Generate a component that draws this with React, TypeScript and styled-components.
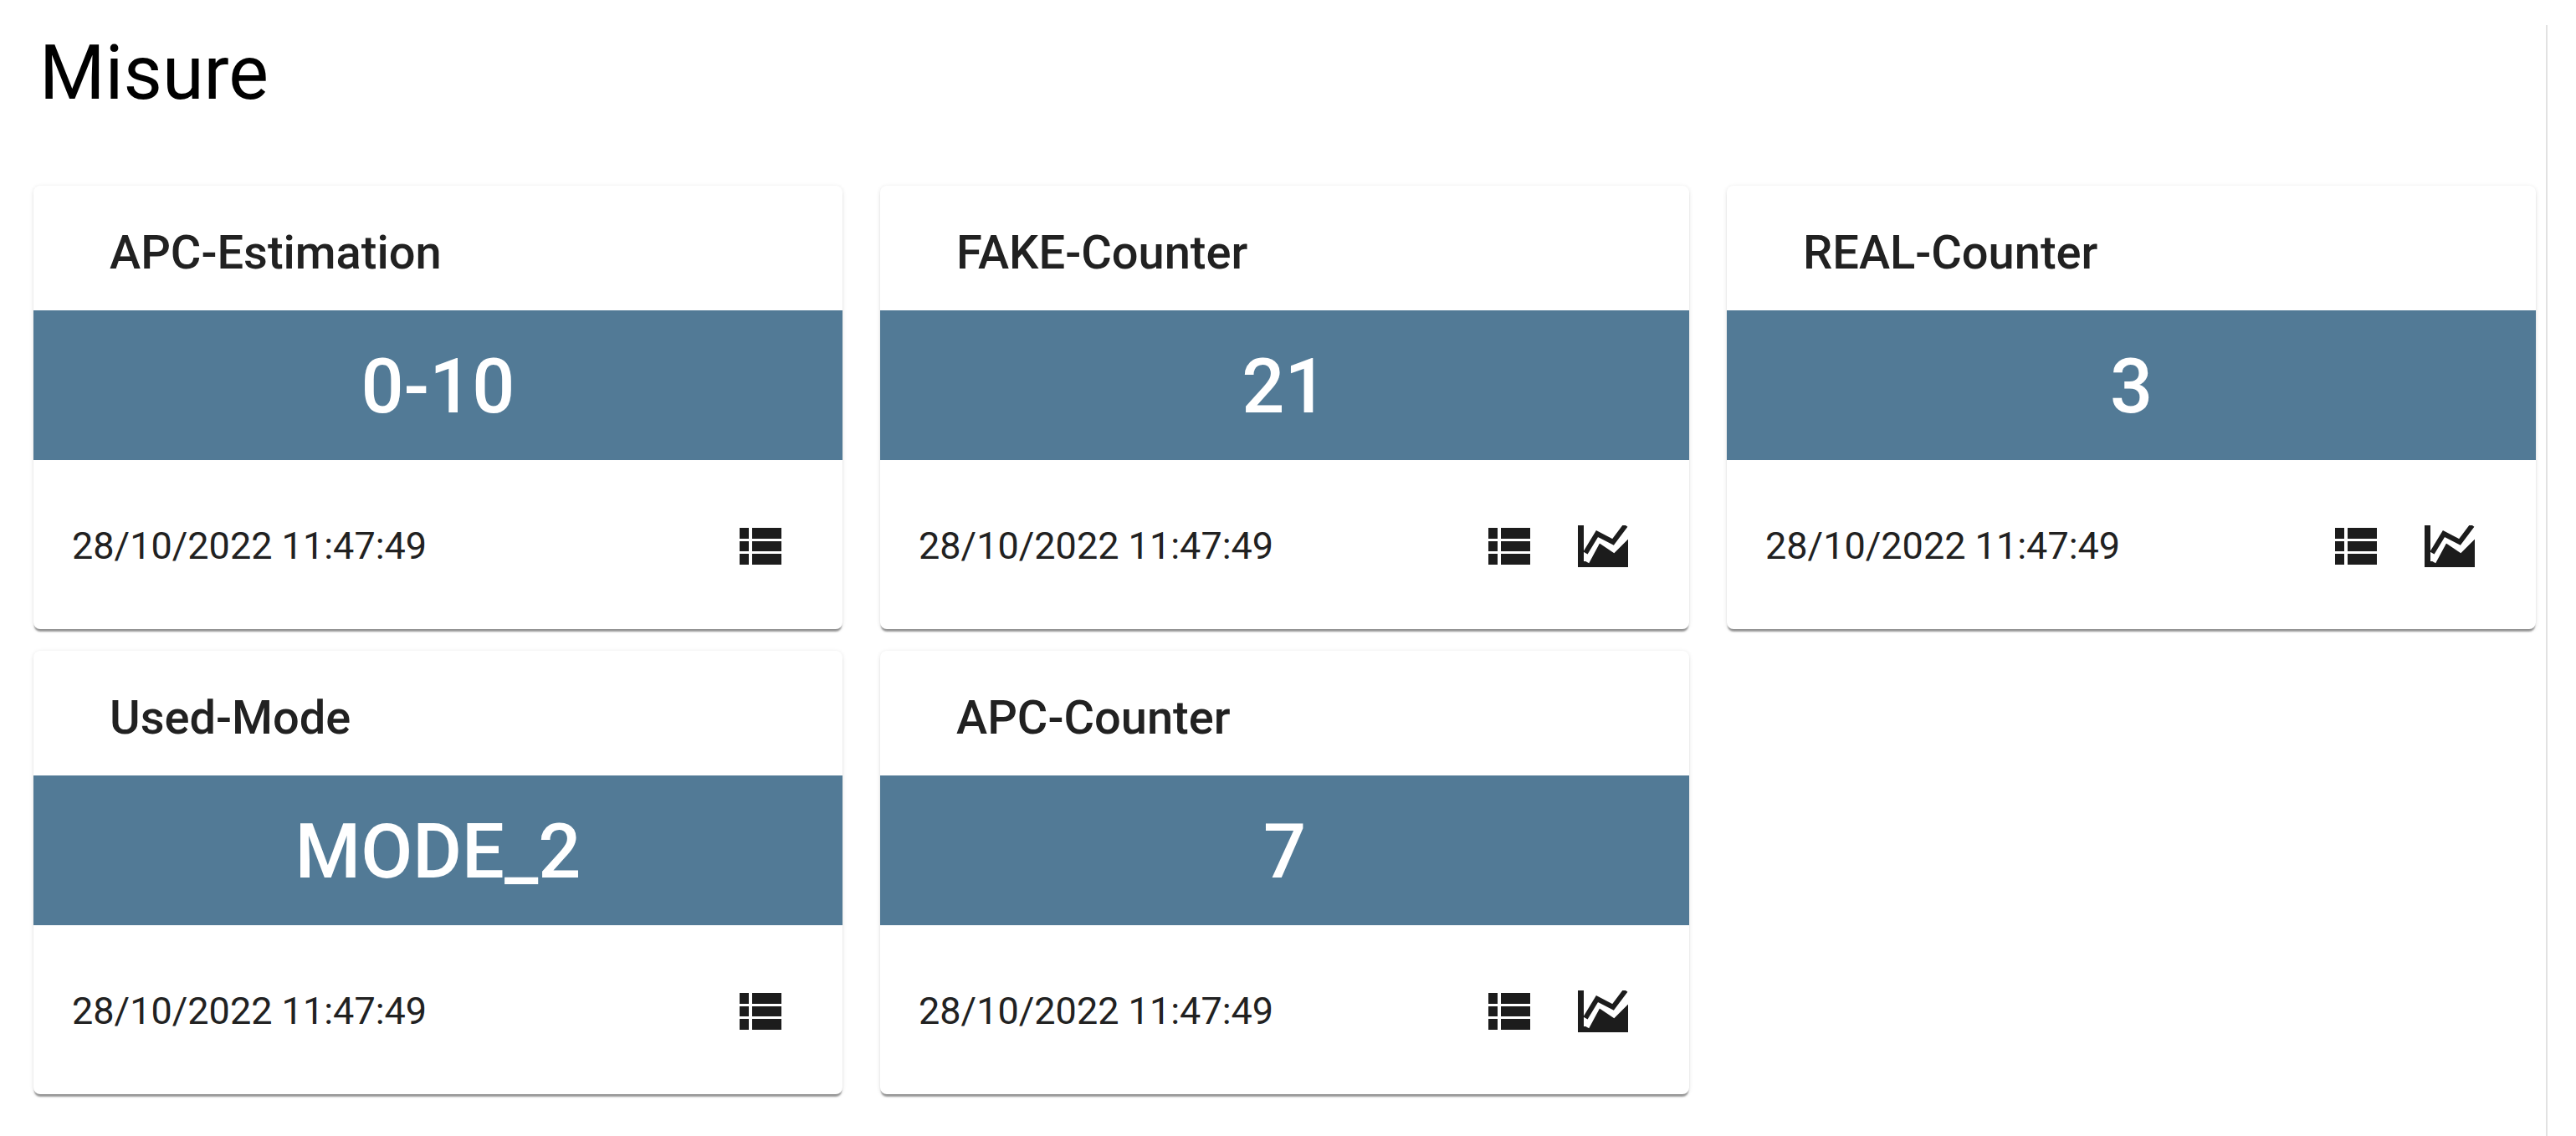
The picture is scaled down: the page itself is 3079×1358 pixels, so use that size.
import styled, { createGlobalStyle } from 'styled-components'

interface Measure {
  name: string
  value: string
  hasChart: boolean
}

const measures: Measure[] = [
  { name: 'APC-Estimation', value: '0-10', hasChart: false },
  { name: 'FAKE-Counter', value: '21', hasChart: true },
  { name: 'REAL-Counter', value: '3', hasChart: true },
  { name: 'Used-Mode', value: 'MODE_2', hasChart: false },
  { name: 'APC-Counter', value: '7', hasChart: true },
]

const GlobalStyle = createGlobalStyle`
  html, body {
    margin: 0;
    padding: 0;
    background: #fff;
    font-family: Roboto, "Liberation Sans", sans-serif;
    overflow: hidden;
  }
`

const Page = styled.div`
  height: 1358px;
  padding-top: 30px;
  box-sizing: border-box;
`

const Panel = styled.main`
  width: 3045px;
  height: 1328px;
  box-sizing: border-box;
  padding: 0 11px 0 40px;
  border-right: 2px solid #e2e2e2;
`

const Title = styled.h1`
  margin: 0 0 79px 7px;
  height: 113px;
  font-size: 90px;
  line-height: 116px;
  font-weight: 400;
  color: #000;
`

const Grid = styled.div`
  display: grid;
  grid-template-columns: repeat(3, 967px);
  grid-template-rows: 530px 530px;
  column-gap: 45px;
  row-gap: 26px;
`

const Card = styled.section`
  border-radius: 8px;
  background: #fff;
  overflow: hidden;
  display: flex;
  flex-direction: column;
  box-shadow: 0 4px 2px -1px rgba(0, 0, 0, 0.38), 0 1px 5px 0 rgba(0, 0, 0, 0.12);
`

const CardTitle = styled.h2`
  margin: 0;
  height: 149px;
  padding: 10px 0 0 91px;
  box-sizing: border-box;
  display: flex;
  align-items: center;
  font-size: 56px;
  font-weight: 500;
  color: #212121;
`

const ValueBar = styled.div`
  height: 179px;
  padding-top: 4px;
  box-sizing: border-box;
  background: #527a96;
  color: #fff;
  display: flex;
  align-items: center;
  justify-content: center;
  font-size: 90px;
  font-weight: 500;
`

const CardFooter = styled.div`
  flex: 1;
  display: flex;
  align-items: center;
  justify-content: space-between;
  padding: 3px 73px 0 46px;
`

const Timestamp = styled.span`
  font-size: 45px;
  color: #212121;
`

const Actions = styled.div`
  display: flex;
  align-items: center;
  gap: 57px;
`

const ListIcon = () => (
  <svg width="50" height="44" viewBox="0 0 50 44" fill="#1c1c1c">
    <path d="M0 0h11v13H0zM15 0h35v13H15zM0 16h11v12H0zM15 16h35v12H15zM0 31h11v13H0zM15 31h35v13H15z" />
  </svg>
)

const ChartIcon = () => (
  <svg width="60" height="50" viewBox="0 0 60 50">
    <path d="M0 0h7v43h53v7H0z" fill="#1c1c1c" />
    <path d="M10 45L25 20 43 32 60 16V45z" fill="#1c1c1c" />
    <path d="M11 44L25 18 43 30 60 13" fill="none" stroke="#fff" strokeWidth="5" />
    <path d="M9 33L23 10 42 20 57 0" fill="none" stroke="#1c1c1c" strokeWidth="6" />
  </svg>
)

const MeasureCard = ({ name, value, hasChart }: Measure) => (
  <Card>
    <CardTitle>{name}</CardTitle>
    <ValueBar>{value}</ValueBar>
    <CardFooter>
      <Timestamp>28/10/2022 11:47:49</Timestamp>
      <Actions>
        <ListIcon />
        {hasChart && <ChartIcon />}
      </Actions>
    </CardFooter>
  </Card>
)

export default function App() {
  return (
    <>
      <GlobalStyle />
      <Page>
        <Panel>
          <Title>Misure</Title>
          <Grid>
            {measures.map((m) => (
              <MeasureCard key={m.name} {...m} />
            ))}
          </Grid>
        </Panel>
      </Page>
    </>
  )
}
